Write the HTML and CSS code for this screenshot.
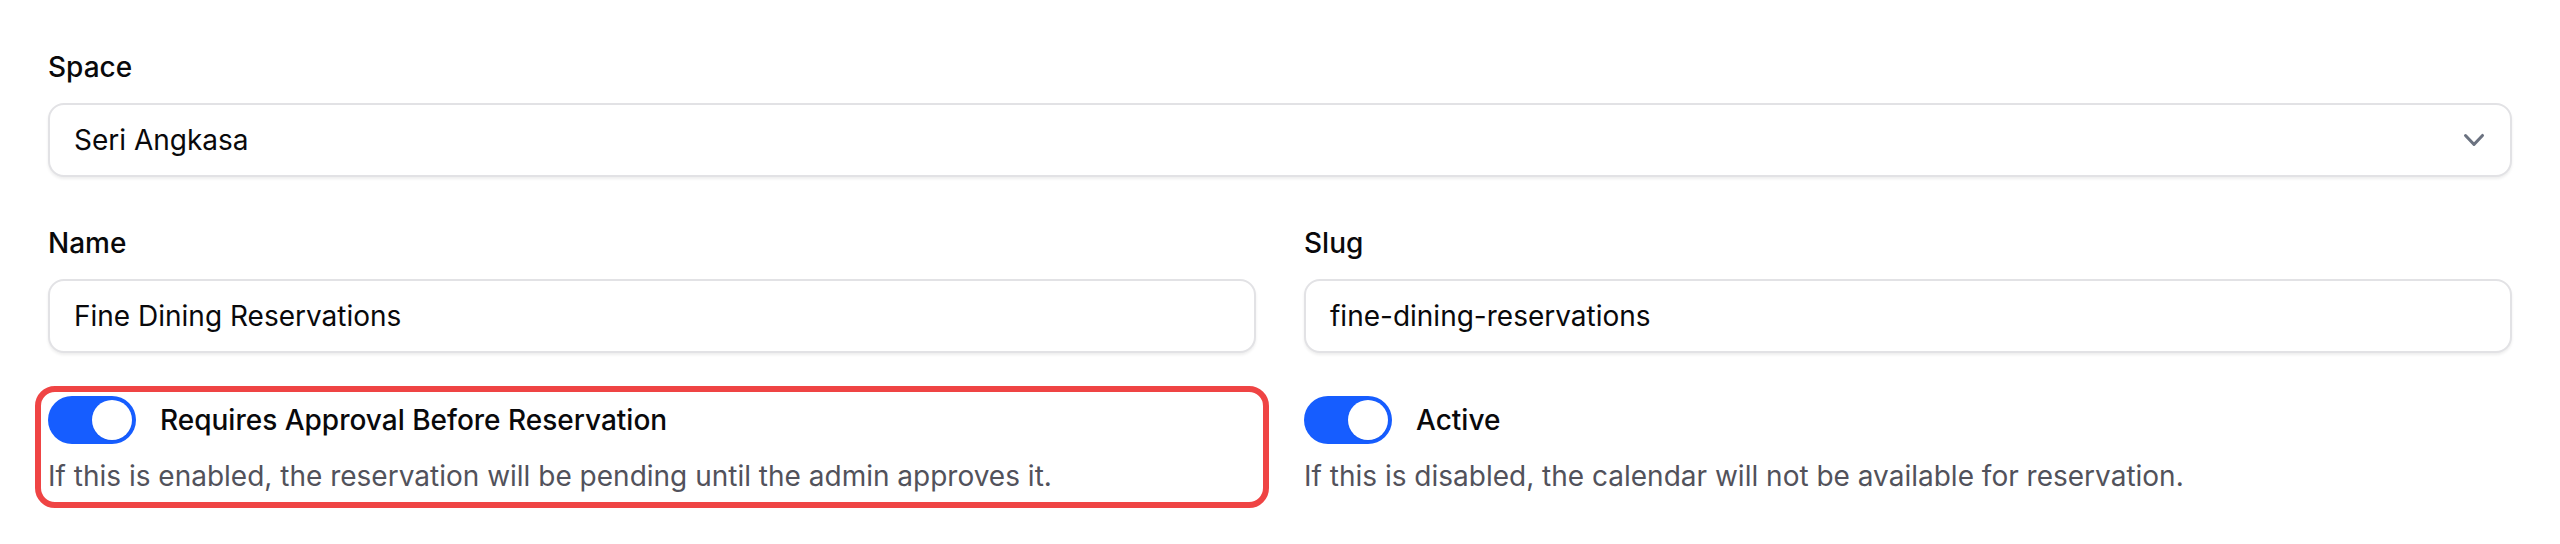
FILE: index.html
```html
<!DOCTYPE html>
<html lang="en">
<head>
<meta charset="utf-8">
<title>Reservation Settings</title>
<link rel="stylesheet" href="styles.css">
</head>
<body>
<form class="form">
  <div class="field">
    <label class="label">Space</label>
    <div class="control select">
      <span class="value">Seri Angkasa</span>
      <svg class="chevron" viewBox="0 0 20 20" fill="currentColor" aria-hidden="true"><path fill-rule="evenodd" d="M5.23 7.21a.75.75 0 011.06.02L10 11.168l3.71-3.938a.75.75 0 111.08 1.04l-4.25 4.5a.75.75 0 01-1.08 0l-4.25-4.5a.75.75 0 01.02-1.06z" clip-rule="evenodd"/></svg>
    </div>
  </div>

  <div class="grid row-two">
    <div class="field">
      <label class="label">Name</label>
      <div class="control"><span class="value">Fine Dining Reservations</span></div>
    </div>
    <div class="field">
      <label class="label">Slug</label>
      <div class="control"><span class="value">fine-dining-reservations</span></div>
    </div>
  </div>

  <div class="grid row-three">
    <div class="toggle-field highlighted">
      <div class="toggle-line">
        <span class="switch on"><span class="knob"></span></span>
        <span class="toggle-label">Requires Approval Before Reservation</span>
      </div>
      <p class="help">If this is enabled, the reservation will be pending until the admin approves it.</p>
    </div>
    <div class="toggle-field">
      <div class="toggle-line">
        <span class="switch on"><span class="knob"></span></span>
        <span class="toggle-label">Active</span>
      </div>
      <p class="help">If this is disabled, the calendar will not be available for reservation.</p>
    </div>
  </div>
</form>
</body>
</html>
```

FILE: styles.css
```css
* { box-sizing: border-box; }

html, body {
  margin: 0;
  padding: 0;
  background: #ffffff;
}

body {
  min-height: 544px;
  font-family: Inter, "Noto Sans", "Liberation Sans", sans-serif;
  font-size: 28px;
  line-height: 40px;
  color: #09090b;
}

.form {
  display: flex;
  flex-direction: column;
  padding: 47px 48px 48px 48px;
  margin: 0;
  min-height: 544px;
}

.field {
  display: flex;
  flex-direction: column;
}

.label {
  display: block;
  font-weight: 500;
  line-height: 40px;
  height: 40px;
  margin-bottom: 16px;
  color: #09090b;
}

.control {
  height: 74px;
  border: 2px solid #e2e2e5;
  border-radius: 16px;
  background: #fff;
  box-shadow: 0 2px 3px rgba(0, 0, 0, 0.07);
  display: flex;
  align-items: center;
  padding: 0 24px;
}

.value {
  color: #09090b;
  font-weight: 400;
}

.select {
  justify-content: space-between;
  padding-right: 16px;
}

.chevron {
  width: 40px;
  height: 40px;
  color: #6b7280;
  flex: none;
}

.grid {
  display: grid;
  grid-template-columns: 1fr 1fr;
  column-gap: 48px;
}

.row-two {
  margin-top: 46px;
}

.row-three {
  margin-top: 43px;
}

.toggle-field {
  position: relative;
  display: flex;
  flex-direction: column;
}

.highlighted::after {
  content: "";
  position: absolute;
  top: -10px;
  left: -13px;
  right: -13px;
  bottom: -12px;
  border: 6px solid #ef4444;
  border-radius: 20px;
  pointer-events: none;
}

.toggle-line {
  display: flex;
  align-items: center;
  gap: 24px;
  height: 48px;
}

.switch {
  width: 88px;
  height: 48px;
  border-radius: 24px;
  background: #165dff;
  padding: 4px;
  display: flex;
  align-items: center;
  justify-content: flex-end;
  flex: none;
}

.knob {
  width: 40px;
  height: 40px;
  border-radius: 50%;
  background: #ffffff;
  box-shadow: 0 1px 2px rgba(0, 0, 0, 0.06);
}

.toggle-label {
  font-weight: 500;
  color: #09090b;
}

.help {
  margin: 12px 0 0 0;
  color: #52525b;
  line-height: 40px;
}
```
